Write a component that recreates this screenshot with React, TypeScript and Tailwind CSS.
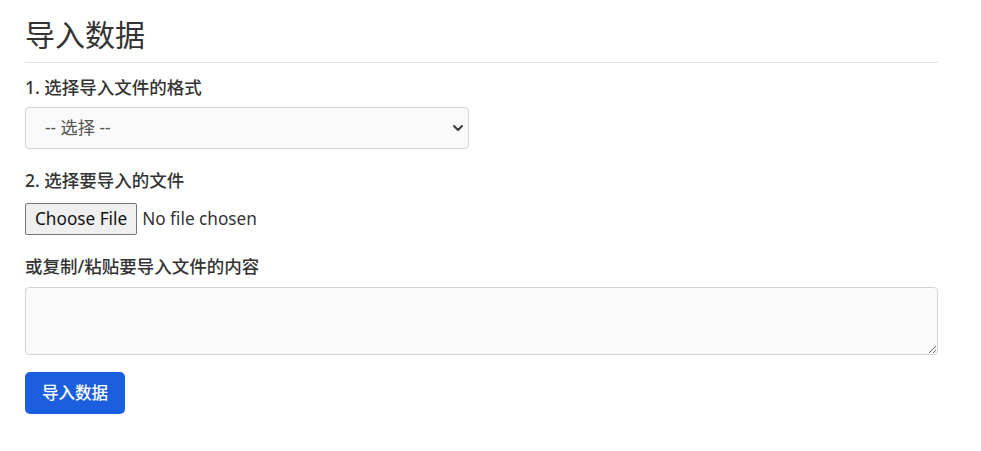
export default function App() {
  return (
    <div className="min-h-screen bg-white px-[25px] pt-[17px] text-[17.2px] text-[#333] font-['Noto_Sans','Noto_Sans_CJK_SC',sans-serif]">
      <div className="w-[913px]">
        <h3 className="border-b border-[#dee2e6] pb-[9px] text-[30px] leading-[36px] font-normal">
          导入数据
        </h3>

        <form className="mt-[12px]" onSubmit={(e) => e.preventDefault()}>
          <div className="mb-[19px]">
            <label className="mb-[8px] block text-[17.5px] font-medium leading-[24px]">1. 选择导入文件的格式</label>
            <div className="relative w-[444px]">
              <select
                defaultValue=""
                className="block h-[42px] w-full appearance-none rounded-[4px] border border-[#d4d4d8] bg-[#fafafa] pl-[19px] pr-[36px] text-[#555] outline-none"
              >
                <option value="">-- 选择 --</option>
                <option value="csv">CSV</option>
                <option value="json">JSON</option>
              </select>
              <svg
                className="pointer-events-none absolute right-[5px] top-[15px] h-[12px] w-[12px]"
                viewBox="0 0 12 12"
                fill="none"
                stroke="#343a40"
                strokeWidth="2"
                strokeLinecap="round"
                strokeLinejoin="round"
              >
                <path d="M2 4l4 4 4-4" />
              </svg>
            </div>
          </div>

          <div className="mb-[19px]">
            <label className="mb-[11px] block text-[17.5px] font-medium leading-[24px]">2. 选择要导入的文件</label>
            <div className="flex items-center">
              <button
                type="button"
                className="h-[32px] rounded-[2px] border border-[#767676] bg-[#efefef] px-[9px] text-[#111]"
              >
                Choose File
              </button>
              <span className="ml-[5px] text-[#333]">No file chosen</span>
            </div>
          </div>

          <div className="mb-[17px]">
            <label className="mb-[9px] block text-[17.5px] font-medium leading-[24px]">或复制/粘贴要导入文件的内容</label>
            <textarea className="block h-[68px] w-full rounded-[4px] border border-[#d4d4d8] bg-[#fafafa] px-[12px] py-[6px] outline-none" />
          </div>

          <button
            type="submit"
            className="h-[42px] w-[100px] rounded-[5px] bg-[#1b5fdf] text-[16.5px] font-medium text-white"
          >
            导入数据
          </button>
        </form>
      </div>
    </div>
  );
}
